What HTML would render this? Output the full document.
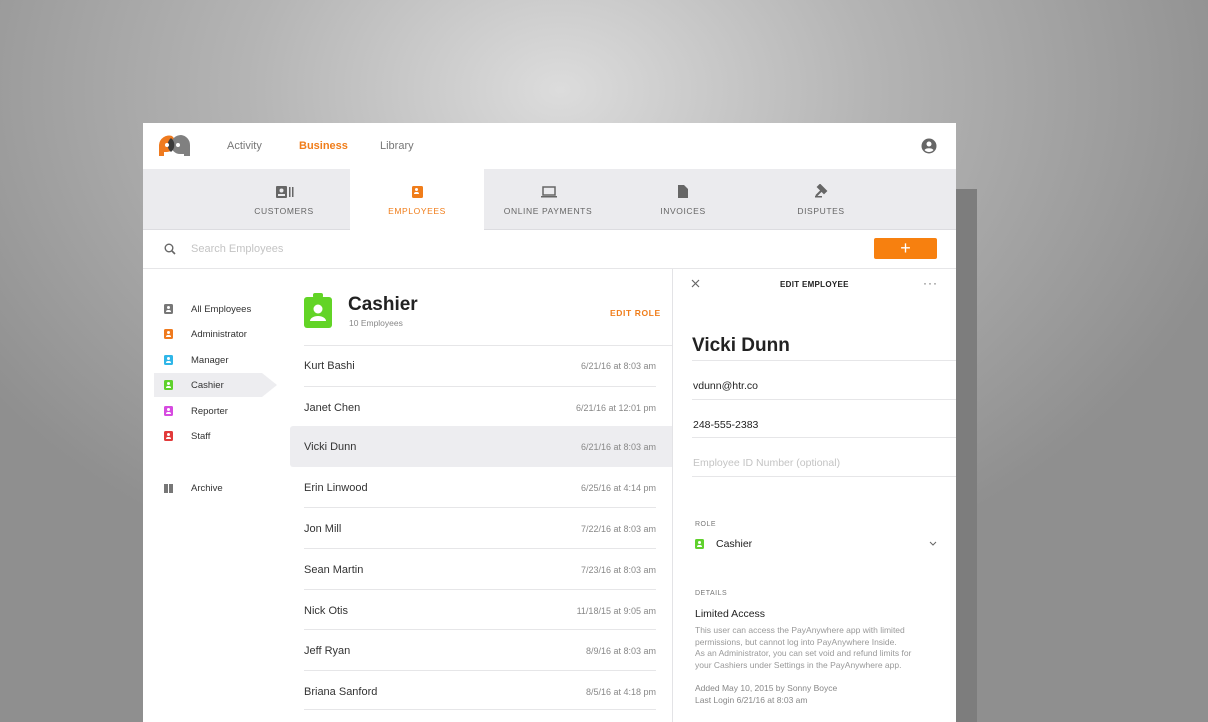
<!DOCTYPE html>
<html style="width:1208px;height:722px;overflow:hidden;background:#999"><head><meta charset="utf-8"><style>
*{margin:0;padding:0;box-sizing:border-box}
body{width:1208px;height:722px;overflow:hidden;position:relative;font-family:"Liberation Sans",sans-serif;background:radial-gradient(ellipse 700px 520px at 560px 90px,#dcdcdc 0%,#b4b4b4 45%,#8f8f8f 100%);}
.a{position:absolute;white-space:nowrap}
.card{position:absolute;left:143px;top:123px;width:813px;height:599px;background:#fff}
.sh{position:absolute;left:956px;top:189px;width:21px;height:533px;background:#7d7d7d}
.tab{position:absolute;top:169px;height:60px;background:#ebebee}
.tl{font-size:8.5px;letter-spacing:.6px;color:#666;transform:translateX(-50%)}
.line{position:absolute;height:1px;background:#e6e6e8}
.nm{font-size:11px;color:#333}
.dt{font-size:9px;color:#888;text-align:right}
.si{font-size:9.5px;color:#333}
.ic{position:absolute;width:9px;height:10px;border-radius:1.5px}
.ic:before{content:"";position:absolute;left:3px;top:2px;width:3px;height:3px;border-radius:50%;background:#fff}
.ic:after{content:"";position:absolute;left:2px;top:6px;width:5px;height:2px;border-radius:2px 2px 0 0;background:#fff}
.lab{font-size:7px;letter-spacing:.5px;color:#777}
.g{font-size:8.5px;color:#999}
</style></head><body>
<div class="sh"></div>
<div class="card"></div>
<!-- header -->
<svg class="a" style="left:158px;top:134px" width="33" height="23" viewBox="0 0 33 23">
<path d="M14 2a10 10 0 0 0-13 9v11h5v-4h3a9 9 0 0 0 5-16z" fill="#ef7a1e"/>
<path d="M23 1a10 10 0 0 0-10 10a9 9 0 0 0 9 9h4v2h6V11A10 10 0 0 0 23 1z" fill="#808080"/>
<path d="M13 4a9 9 0 0 0 0 14a9 9 0 0 0 0-14z" fill="#3a3a3a"/>
<circle cx="9" cy="11" r="2" fill="#fff"/><circle cx="20" cy="11" r="2" fill="#fff"/></svg>
<div class="a" style="left:227px;top:140px;font-size:11px;color:#777">Activity</div>
<div class="a" style="left:299px;top:140px;font-size:11px;color:#f07d1a;font-weight:bold">Business</div>
<div class="a" style="left:380px;top:140px;font-size:11px;color:#777">Library</div>
<svg class="a" style="left:921px;top:138px" width="16" height="16" viewBox="0 0 16 16"><circle cx="8" cy="8" r="7.5" fill="#666"/><circle cx="8" cy="6" r="2.5" fill="#fff"/><path d="M3.5 12a5 3 0 0 1 9 0a6 6 0 0 1-9 0z" fill="#fff"/></svg>
<!-- tabs -->
<div class="tab" style="left:143px;width:813px"></div>
<div class="a" style="left:350px;top:169px;width:134px;height:61px;background:#fff"></div>
<div class="line" style="left:143px;top:229px;width:207px;background:#dcdce0"></div>
<div class="line" style="left:484px;top:229px;width:472px;background:#dcdce0"></div>
<svg class="a" style="left:276px;top:186px" width="18" height="12"><rect x="0" y="0" width="11" height="12" rx="1" fill="#666"/><circle cx="5.5" cy="4.5" r="2" fill="#ebebee"/><rect x="2" y="8" width="7" height="2" fill="#ebebee"/><rect x="13" y="1" width="1.5" height="10" fill="#666"/><rect x="16" y="1" width="1.5" height="10" fill="#666"/></svg>
<div class="a tl" style="left:284px;top:206px">CUSTOMERS</div>
<div class="ic" style="left:412px;top:186px;width:11px;height:12px;background:#f07d1a"></div>
<div class="a tl" style="left:417px;top:206px;color:#f07d1a">EMPLOYEES</div>
<svg class="a" style="left:541px;top:186px" width="16" height="12"><rect x="2" y="1" width="12" height="8" fill="none" stroke="#666" stroke-width="1.5"/><rect x="0" y="10" width="16" height="1.5" fill="#666"/></svg>
<div class="a tl" style="left:548px;top:206px">ONLINE PAYMENTS</div>
<svg class="a" style="left:678px;top:185px" width="10" height="13"><path d="M0 0h6l4 4v9H0z" fill="#666"/></svg>
<div class="a tl" style="left:683px;top:206px">INVOICES</div>
<svg class="a" style="left:814px;top:184px" width="14" height="14"><path d="M6 1l6 6-2 2-6-6z M8 6l-6 6" stroke="#666" stroke-width="2" fill="#666"/><rect x="1" y="12" width="7" height="1.5" fill="#666"/></svg>
<div class="a tl" style="left:821px;top:206px">DISPUTES</div>
<!-- search -->
<svg class="a" style="left:164px;top:243px" width="12" height="12"><circle cx="5" cy="5" r="3.8" fill="none" stroke="#666" stroke-width="1.4"/><path d="M8 8l3 3" stroke="#666" stroke-width="1.6"/></svg>
<div class="a" style="left:191px;top:243px;font-size:11px;color:#c4c4c4">Search Employees</div>
<div class="a" style="left:874px;top:238px;width:63px;height:21px;background:#f7800f;border-radius:2px;color:#fff;font-size:18px;line-height:20px;text-align:center">+</div>
<div class="line" style="left:143px;top:268px;width:813px"></div>
<!-- sidebar -->
<div class="a" style="left:154px;top:373px;width:108px;height:24px;background:#ededf0"></div>
<div class="a" style="left:262px;top:373px;width:0;height:0;border-top:12px solid transparent;border-bottom:12px solid transparent;border-left:15px solid #ededf0"></div>
<div class="ic" style="left:164px;top:304px;background:#777"></div><div class="a si" style="left:191px;top:304px">All Employees</div>
<div class="ic" style="left:164px;top:329px;background:#ef7a1e"></div><div class="a si" style="left:191px;top:329px">Administrator</div>
<div class="ic" style="left:164px;top:355px;background:#2fb6e8"></div><div class="a si" style="left:191px;top:355px">Manager</div>
<div class="ic" style="left:164px;top:380px;background:#5fd12c"></div><div class="a si" style="left:191px;top:380px">Cashier</div>
<div class="ic" style="left:164px;top:406px;background:#d64ae0"></div><div class="a si" style="left:191px;top:406px">Reporter</div>
<div class="ic" style="left:164px;top:431px;background:#e23a3a"></div><div class="a si" style="left:191px;top:431px">Staff</div>
<div class="a" style="left:164px;top:484px;width:4px;height:9px;background:#777"></div><div class="a" style="left:169px;top:484px;width:4px;height:9px;background:#777"></div>
<div class="a si" style="left:191px;top:483px">Archive</div>
<!-- list -->
<div class="a" style="left:313px;top:293px;width:10px;height:5px;background:#62d426;border-radius:2px"></div>
<svg class="a" style="left:304px;top:297px" width="28" height="31"><rect width="28" height="31" rx="3" fill="#62d426"/><circle cx="14" cy="12" r="4.5" fill="#fff"/><path d="M6 24a8 5 0 0 1 16 0z" fill="#fff"/></svg>
<div class="a" style="left:348px;top:294px;font-size:19px;font-weight:bold;color:#222">Cashier</div>
<div class="a" style="left:349px;top:318px;font-size:8.5px;color:#888">10 Employees</div>
<div class="a" style="left:610px;top:308px;font-size:8.5px;font-weight:bold;letter-spacing:.6px;color:#f07d1a">EDIT ROLE</div>
<div class="line" style="left:304px;top:345px;width:368px"></div>
<div class="a" style="left:290px;top:426px;width:382px;height:41px;background:#ededf0;border-radius:3px 0 0 3px"></div>
<div style="position:absolute;left:304px;top:345px;width:352px">
<div style="position:relative;height:40.6px"><span class="a nm" style="left:0;top:15px">Kurt Bashi</span><span class="a dt" style="right:0;top:16px">6/21/16 at 8:03 am</span></div>
<div style="position:relative;height:40.6px;border-top:1px solid #e6e6e8"><span class="a nm" style="left:0;top:15px">Janet Chen</span><span class="a dt" style="right:0;top:16px">6/21/16 at 12:01 pm</span></div>
<div style="position:relative;height:40.6px"><span class="a nm" style="left:0;top:15px">Vicki Dunn</span><span class="a dt" style="right:0;top:16px">6/21/16 at 8:03 am</span></div>
<div style="position:relative;height:40.6px"><span class="a nm" style="left:0;top:15px">Erin Linwood</span><span class="a dt" style="right:0;top:16px">6/25/16 at 4:14 pm</span></div>
<div style="position:relative;height:40.6px;border-top:1px solid #e6e6e8"><span class="a nm" style="left:0;top:15px">Jon Mill</span><span class="a dt" style="right:0;top:16px">7/22/16 at 8:03 am</span></div>
<div style="position:relative;height:40.6px;border-top:1px solid #e6e6e8"><span class="a nm" style="left:0;top:15px">Sean Martin</span><span class="a dt" style="right:0;top:16px">7/23/16 at 8:03 am</span></div>
<div style="position:relative;height:40.6px;border-top:1px solid #e6e6e8"><span class="a nm" style="left:0;top:15px">Nick Otis</span><span class="a dt" style="right:0;top:16px">11/18/15 at 9:05 am</span></div>
<div style="position:relative;height:40.6px;border-top:1px solid #e6e6e8"><span class="a nm" style="left:0;top:15px">Jeff Ryan</span><span class="a dt" style="right:0;top:16px">8/9/16 at 8:03 am</span></div>
<div style="position:relative;height:40.6px;border-top:1px solid #e6e6e8;border-bottom:1px solid #e6e6e8"><span class="a nm" style="left:0;top:15px">Briana Sanford</span><span class="a dt" style="right:0;top:16px">8/5/16 at 4:18 pm</span></div>
</div>
<div class="a" style="left:672px;top:269px;width:1px;height:453px;background:#e3e3e6"></div>
<!-- right panel -->
<svg class="a" style="left:691px;top:279px" width="9" height="9"><path d="M1 1l7 7M8 1l-7 7" stroke="#666" stroke-width="1.2"/></svg>
<div class="a" style="left:780px;top:280px;font-size:8px;font-weight:bold;letter-spacing:.3px;color:#222">EDIT EMPLOYEE</div>
<div class="a" style="left:923px;top:276px;font-size:12px;color:#666;letter-spacing:1px">···</div>
<div class="a" style="left:692px;top:335px;font-size:19px;font-weight:bold;color:#222">Vicki Dunn</div>
<div class="line" style="left:692px;top:360px;width:264px"></div>
<div class="a" style="left:693px;top:380px;font-size:10.5px;color:#222">vdunn@htr.co</div>
<div class="line" style="left:692px;top:399px;width:264px"></div>
<div class="a" style="left:693px;top:419px;font-size:10.5px;color:#222">248-555-2383</div>
<div class="line" style="left:692px;top:437px;width:264px"></div>
<div class="a" style="left:693px;top:457px;font-size:10.5px;color:#c4c4c4">Employee ID Number (optional)</div>
<div class="line" style="left:692px;top:476px;width:264px"></div>
<div class="a lab" style="left:695px;top:521px">ROLE</div>
<div class="ic" style="left:695px;top:539px;background:#5fd12c"></div>
<div class="a" style="left:716px;top:538px;font-size:10.5px;color:#222">Cashier</div>
<svg class="a" style="left:929px;top:541px" width="8" height="5"><path d="M1 1l3 3 3-3" stroke="#666" fill="none"/></svg>
<div class="a lab" style="left:695px;top:590px">DETAILS</div>
<div class="a" style="left:695px;top:608px;font-size:10.5px;color:#222">Limited Access</div>
<div class="a g" style="left:695px;top:625px;line-height:11.6px">This user can access the PayAnywhere app with limited<br>permissions, but cannot log into PayAnywhere Inside.<br>As an Administrator, you can set void and refund limits for<br>your Cashiers under Settings in the PayAnywhere app.</div>
<div class="a g" style="left:695px;top:683px;line-height:11.6px;color:#888">Added May 10, 2015 by Sonny Boyce<br>Last Login 6/21/16 at 8:03 am</div>
</body></html>
